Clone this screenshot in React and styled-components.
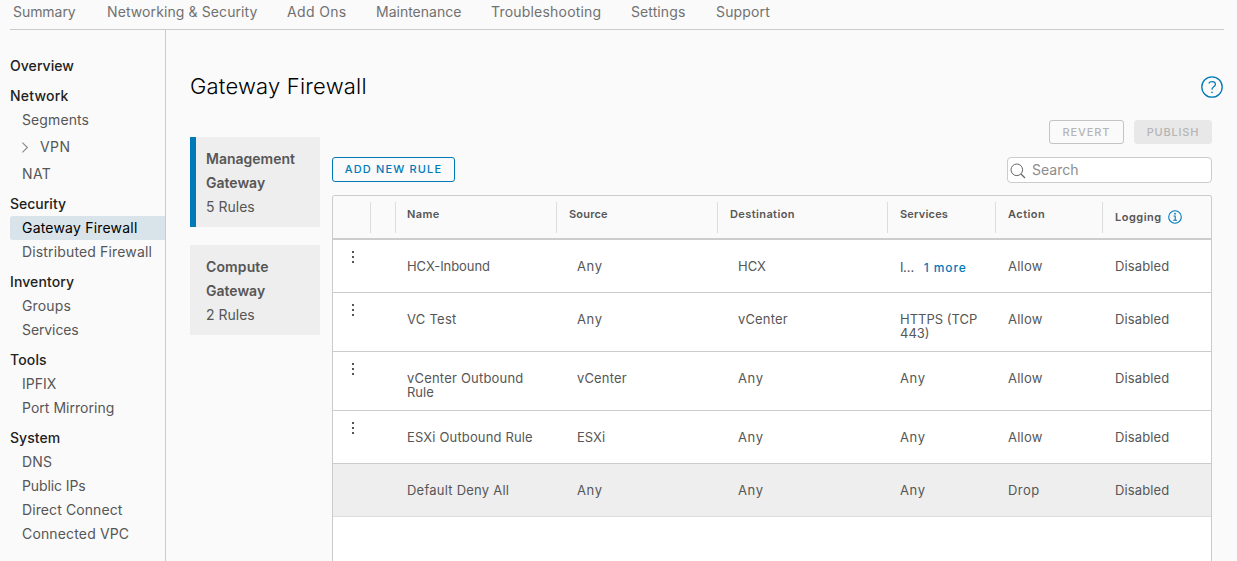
import React from "react";
import styled, { createGlobalStyle } from "styled-components";

const Global = createGlobalStyle`
  * { box-sizing: border-box; }
  html, body { margin: 0; height: 100%; overflow: hidden; background: #fafafa; }
  body { font-family: Inter, "Liberation Sans", sans-serif; font-size: 14px; color: #565656; }
`;

const T = styled.span`
  letter-spacing: ${(p) => p.$track || 0}px;
  white-space: nowrap;
`;

const Page = styled.div`
  height: 561px;
  overflow: hidden;
  display: flex;
  flex-direction: column;
`;

const TopNav = styled.nav`
  height: 30px;
  margin: 0 13px 0 10px;
  padding: 0 0 5px 3px;
  display: flex;
  gap: 30px;
  line-height: 24px;
  color: #717171;
  border-bottom: 1px solid #ccc;
  flex: none;
`;

const TopItem = styled.a`
  width: ${(p) => p.$w}px;
  letter-spacing: ${(p) => p.$track || 0}px;
  white-space: nowrap;
`;

const Body = styled.div`
  flex: 1;
  display: flex;
  min-height: 0;
`;

const Sidebar = styled.aside`
  width: 166px;
  padding: 24px 0 0 10px;
  border-right: 1px solid #ccc;
  line-height: 24px;
  flex: none;
`;

const Section = styled.section`
  margin-bottom: 6px;
`;

const SectionTitle = styled.div`
  height: 24px;
  color: #222;
  font-weight: 500;
`;

const SideLink = styled.div`
  height: ${(p) => (p.$tall ? 30 : 24)}px;
  padding-left: 12px;
  display: flex;
  align-items: center;
  border-radius: 3px 0 0 3px;
  color: ${(p) => (p.$active ? "#000" : "#565656")};
  background: ${(p) => (p.$active ? "#d9e4ea" : "transparent")};
`;

const Caret = styled.svg`
  width: 6px;
  height: 12px;
  margin-right: 12px;
`;

const Main = styled.main`
  flex: 1;
  padding: 42px 14px 0 24px;
  display: flex;
  flex-direction: column;
`;

const TitleRow = styled.header`
  height: 30px;
  display: flex;
  justify-content: space-between;
  align-items: center;
`;

const Title = styled.h1`
  margin: 0 0 2px;
  font-size: 22px;
  line-height: 30px;
  font-weight: 300;
  color: #000;
`;

const HelpIcon = styled.svg`
  width: 22px;
  height: 22px;
`;

const Content = styled.div`
  flex: 1;
  display: flex;
  gap: 12px;
  padding: 18px 11px 0 0;
  min-height: 0;
`;

const Gateways = styled.div`
  width: 130px;
  padding-top: 17px;
  display: flex;
  flex-direction: column;
  gap: 18px;
  flex: none;
`;

const GatewayCard = styled.div`
  height: 90px;
  padding: 10px 0 0 ${(p) => (p.$active ? 10 : 16)}px;
  border-left: ${(p) => (p.$active ? "6px solid #0079b8" : "0")};
  background: #eee;
  line-height: 24px;
`;

const GatewayName = styled.div`
  width: 100px;
  font-weight: 600;
`;

const Rules = styled.div`
  flex: 1;
  min-width: 0;
  display: flex;
  flex-direction: column;
`;

const Actions = styled.div`
  display: flex;
  justify-content: flex-end;
  gap: 10px;
`;

const Button = styled.button`
  width: ${(p) => p.$w}px;
  height: ${(p) => p.$h || 24}px;
  padding: 0 0 ${(p) => (p.$kind === "outline" ? 1 : 0)}px;
  font: 500 11px Inter, "Liberation Sans", sans-serif;
  letter-spacing: ${(p) => p.$track}px;
  text-align: center;
  white-space: nowrap;
  border-radius: 3px;
  border: 1px solid ${(p) => ({ outline: "#0079b8", muted: "#c4c4c4", solid: "#e8e8e8" })[p.$kind]};
  background: ${(p) => (p.$kind === "solid" ? "#e8e8e8" : "transparent")};
  color: ${(p) => (p.$kind === "outline" ? "#0079b8" : "#b5b5b5")};
`;

const Toolbar = styled.div`
  display: flex;
  justify-content: space-between;
  align-items: flex-start;
  margin: 13px 0 12px;
  height: 26px;
`;

const SearchBox = styled.label`
  width: 205px;
  height: 26px;
  padding: 0 0 1px 2px;
  display: flex;
  align-items: center;
  gap: 6px;
  border: 1px solid #ccc;
  border-radius: 4px;
  background: #fff;
  color: #8c8c8c;
`;

const SearchIcon = styled.svg`
  width: 16px;
  height: 16px;
  margin-top: 2px;
`;

const Grid = styled.div`
  flex: 1;
  border: 1px solid #ccc;
  border-bottom: 0;
  border-radius: 3px 3px 0 0;
  background: #fff;
  font-size: 13px;
  line-height: 14px;
`;

const columns = "38px 25px 161px 161px 170px 108px 107px 1fr";

const HeadRow = styled.div`
  display: grid;
  grid-template-columns: ${columns};
  height: 44px;
  padding: 6px 0 5px;
  border-bottom: 2px solid #ccc;
  border-radius: 3px 3px 0 0;
  background: #fafafa;
`;

const HeadCell = styled.div`
  padding: 5px 0 0 ${(p) => (p.$first ? 11 : 12)}px;
  display: flex;
  align-items: flex-start;
  border-right: ${(p) => (p.$last ? 0 : "1px solid #ddd")};
  font-size: 11px;
  font-weight: 600;
  letter-spacing: ${(p) => p.$track || 0}px;
  white-space: nowrap;
`;

const LoggingLabel = styled.div`
  display: flex;
  align-items: center;
  gap: 6px;
  padding-top: 2px;
`;

const InfoIcon = styled.svg`
  width: 14px;
  height: 14px;
  margin-top: 1px;
`;

const Row = styled.div`
  display: grid;
  grid-template-columns: ${columns};
  height: ${(p) => (p.$tall ? 59 : 53)}px;
  border-bottom: 1px solid ${(p) => (p.$shaded ? "#ddd" : "#ccc")};
  background: ${(p) => (p.$shaded ? "#eee" : "#fff")};
`;

const Cell = styled.div`
  padding: ${(p) => p.$top || 19}px 0 0 ${(p) => p.$inset || 12}px;
`;

const DotsCell = styled.div`
  padding: 10px 0 0 19px;
`;

const Dots = styled.svg`
  display: block;
  width: 3px;
  height: 14px;
`;

const More = styled.a`
  margin-left: 10px;
  font-size: 12px;
  font-weight: 500;
  letter-spacing: 0.9px;
  color: #0079b8;
`;

const top = [
  ["Summary", 64, -0.05],
  ["Networking & Security", 150, 0.1],
  ["Add Ons", 59, 0.35],
  ["Maintenance", 85, 0],
  ["Troubleshooting", 110, 0.2],
  ["Settings", 55, 0.1],
  ["Support", 54, 0.15],
];

const side = [
  ["Overview", 0.05, []],
  ["Network", 0.2, [["Segments", 0.1], ["VPN", 0.4], ["NAT", 0.4]]],
  ["Security", 0, [["Gateway Firewall", 0.2], ["Distributed Firewall", 0.15]]],
  ["Inventory", 0.1, [["Groups", 0.15], ["Services", -0.1]]],
  ["Tools", 0.15, [["IPFIX", 0], ["Port Mirroring", 0.03]]],
  ["System", 0.05, [["DNS", 0.2], ["Public IPs", -0.1], ["Direct Connect", 0.1], ["Connected VPC", 0.15]]],
];

const rules = [
  { name: ["HCX-Inbound"], src: "Any", dst: "HCX", svc: ["I…"], more: "1 more", action: "Allow" },
  { name: ["VC Test"], src: "Any", dst: "vCenter", svc: ["HTTPS (TCP", "443)"], action: "Allow", tall: true },
  { name: ["vCenter Outbound", "Rule"], src: "vCenter", dst: "Any", svc: ["Any"], action: "Allow", tall: true },
  { name: ["ESXi Outbound Rule"], src: "ESXi", dst: "Any", svc: ["Any"], action: "Allow" },
  { name: ["Default Deny All"], src: "Any", dst: "Any", svc: ["Any"], action: "Drop", shaded: true },
];

const tracking = {
  "HCX-Inbound": -0.08,
  "VC Test": 0.25,
  "vCenter Outbound": 0.2,
  "ESXi Outbound Rule": 0.15,
  "Default Deny All": 0.23,
  Any: 0.6,
  vCenter: 0.15,
  Allow: 0.25,
  Drop: 0.45,
  Disabled: 0.12,
};

const Lines = ({ items }) =>
  items.map((t) => <div key={t}><T $track={tracking[t]}>{t}</T></div>);

export default function App() {
  return (
    <Page>
      <Global />
      <TopNav>
        {top.map(([t, w, k]) => <TopItem key={t} $w={w} $track={k}>{t}</TopItem>)}
      </TopNav>
      <Body>
        <Sidebar>
          {side.map(([title, k, links]) => (
            <Section key={title}>
              <SectionTitle><T $track={k}>{title}</T></SectionTitle>
              {links.map(([t, lk]) => (
                <SideLink key={t} $tall={t === "VPN"} $active={t === "Gateway Firewall"}>
                  {t === "VPN" && (
                    <Caret viewBox="0 0 6 12"><path d="M.4 1.6l5 4.9-5 4.9" fill="none" stroke="#8c8c8c" strokeWidth="1.2" /></Caret>
                  )}
                  <T $track={lk}>{t}</T>
                </SideLink>
              ))}
            </Section>
          ))}
        </Sidebar>
        <Main>
          <TitleRow>
            <Title><T $track={0.2}>Gateway Firewall</T></Title>
            <HelpIcon viewBox="0 0 22 22" fill="none" stroke="#0079b8">
              <circle cx="11" cy="11" r="10.2" strokeWidth="1.3" />
              <path d="M7.7 7.3c.7-1 1.9-1.6 3.3-1.6 2 0 3.4 1 3.4 2.7 0 2.3-3.4 2.3-3.4 4.7v.6" strokeWidth="1.2" />
              <circle cx="11" cy="16.4" r=".8" fill="#0079b8" stroke="none" />
            </HelpIcon>
          </TitleRow>
          <Content>
            <Gateways>
              <GatewayCard $active>
                <GatewayName>Management Gateway</GatewayName>
                <T>5 Rules</T>
              </GatewayCard>
              <GatewayCard>
                <GatewayName><T $track={0.12}>Compute</T> Gateway</GatewayName>
                <T>2 Rules</T>
              </GatewayCard>
            </Gateways>
            <Rules>
              <Actions>
                <Button $w={75} $kind="muted" $track={0.9}>REVERT</Button>
                <Button $w={78} $kind="solid" $track={0.8}>PUBLISH</Button>
              </Actions>
              <Toolbar>
                <Button $w={123} $h={25} $kind="outline" $track={1.15}>ADD NEW RULE</Button>
                <SearchBox>
                  <SearchIcon viewBox="0 0 16 16" fill="none" stroke="#666">
                    <circle cx="6.8" cy="6.8" r="5.8" />
                    <path d="M11 11l4 4" strokeWidth="1.2" />
                  </SearchIcon>
                  <T>Search</T>
                </SearchBox>
              </Toolbar>
              <Grid>
                <HeadRow>
                  <HeadCell />
                  <HeadCell />
                  <HeadCell $first $track={0.4}>Name</HeadCell>
                  <HeadCell $track={0.2}>Source</HeadCell>
                  <HeadCell $track={0.4}>Destination</HeadCell>
                  <HeadCell $track={0.2}>Services</HeadCell>
                  <HeadCell $track={0.45}>Action</HeadCell>
                  <HeadCell $last $track={0.5}>
                    <LoggingLabel>
                      Logging
                      <InfoIcon viewBox="0 0 14 14" fill="none" stroke="#0079b8">
                        <circle cx="7" cy="7" r="6.3" strokeWidth="1.1" />
                        <path d="M5.5 6h1.7v4.3M5.2 10.3h3.8" strokeWidth="1.1" />
                        <circle cx="7" cy="3.7" r=".9" fill="#0079b8" stroke="none" />
                      </InfoIcon>
                    </LoggingLabel>
                  </HeadCell>
                </HeadRow>
                {rules.map((r) => (
                  <Row key={r.name[0]} $tall={r.tall} $shaded={r.shaded}>
                    <DotsCell>
                      {!r.shaded && (
                        <Dots viewBox="0 0 3 14" fill="#565656">
                          <rect y="1" width="2" height="2" />
                          <rect y="6" width="2" height="2" />
                          <rect y="11" width="2" height="2" />
                        </Dots>
                      )}
                    </DotsCell>
                    <Cell />
                    <Cell $inset={11}><Lines items={r.name} /></Cell>
                    <Cell $inset={20}><Lines items={[r.src]} /></Cell>
                    <Cell $inset={20}><Lines items={[r.dst]} /></Cell>
                    <Cell $top={r.more ? 20 : 19}>
                      {r.more ? <><T $track={-0.5}>{r.svc[0]}</T><More>{r.more}</More></> : <Lines items={r.svc} />}
                    </Cell>
                    <Cell><Lines items={[r.action]} /></Cell>
                    <Cell><Lines items={["Disabled"]} /></Cell>
                  </Row>
                ))}
              </Grid>
            </Rules>
          </Content>
        </Main>
      </Body>
    </Page>
  );
}
